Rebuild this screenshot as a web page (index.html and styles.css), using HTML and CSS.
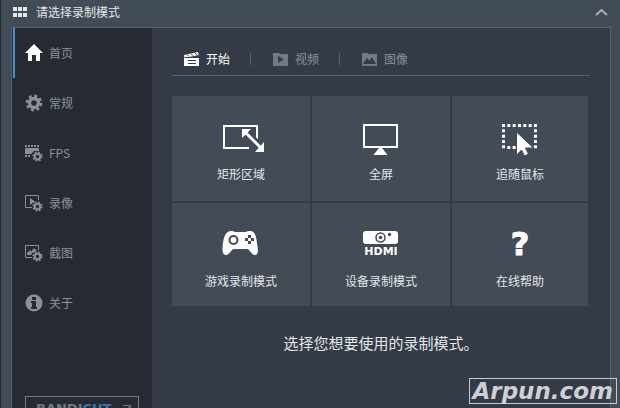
FILE: index.html
```html
<!DOCTYPE html>
<html lang="zh-CN">
<head>
  <meta charset="UTF-8" />
  <meta name="viewport" content="width=device-width, initial-scale=1.0"/>
  <title>请选择录制模式</title>
  <link rel="stylesheet" href="styles.css">
</head>
<body>
  <!-- shared gear shape -->
  <svg class="defs" width="0" height="0" aria-hidden="true">
    <symbol id="gear" viewBox="-9 -9 18 18">
      <g fill="none" stroke="currentColor">
        <circle r="4.5" stroke-width="3.4"/>
        <circle r="7" stroke-width="2.8" stroke-dasharray="2.9 2.6"/>
      </g>
    </symbol>
  </svg>

  <div class="window">
    <header class="titlebar">
      <svg class="grid-icon" width="14" height="10" viewBox="0 0 14 10" fill="currentColor">
        <path d="M0 0h4v4H0zM5 0h4v4H5zM10 0h4v4h-4zM0 6h4v4H0zM5 6h4v4H5zM10 6h4v4h-4z"/>
      </svg>
      <h1>请选择录制模式</h1>
      <button class="collapse" type="button" aria-label="收起">
        <svg width="14" height="8" viewBox="0 0 14 8" fill="none" stroke="currentColor" stroke-width="2"><path d="M1 7 6.500 2 12 7"/></svg>
      </button>
    </header>

    <div class="frame">
      <aside class="sidebar">
        <nav>
          <a class="nav-item active" href="#home">
            <svg width="18" height="18" viewBox="0 0 18 18" fill="currentColor"><path d="M9 0 18 9h-3v8h-4v-6H7v6H3V9H0z"/></svg>
            <span>首页</span>
          </a>
          <a class="nav-item" href="#general">
            <svg width="18" height="18"><use href="#gear"/></svg>
            <span>常规</span>
          </a>
          <a class="nav-item" href="#fps">
            <svg width="18" height="18" viewBox="0 0 18 18" fill="currentColor">
              <path d="M0 1h2v2H0zM3 1h2v2H3zM6 1h2v2H6zM9 1h2v2H9zM12 1h2v2h-2zM0 4h14v3H9L6 10H0zM0 11h2v2H0zM3 11h2v2H3z"/>
              <use href="#gear" x="7" y="7" width="11" height="11"/>
            </svg>
            <span>FPS</span>
          </a>
          <a class="nav-item" href="#video">
            <svg width="18" height="18" viewBox="0 0 18 18" fill="currentColor">
              <path d="M7 13.500H.5v-12h13V6" fill="none" stroke="currentColor"/>
              <path d="m5 4 5 3.500L5 11z"/>
              <use href="#gear" x="7" y="7" width="11" height="11"/>
            </svg>
            <span>录像</span>
          </a>
          <a class="nav-item" href="#image">
            <svg width="18" height="18" viewBox="0 0 18 18" fill="currentColor">
              <path d="M7 13.500H.5v-12h13V6" fill="none" stroke="currentColor"/>
              <path d="M2 11V9l3-3 1 2 3-4 3 3-5 2-1 2z"/>
              <use href="#gear" x="7" y="7" width="11" height="11"/>
            </svg>
            <span>截图</span>
          </a>
          <a class="nav-item" href="#about">
            <svg width="18" height="18" viewBox="0 0 18 18">
              <circle cx="9" cy="9" r="8.500" fill="currentColor"/>
              <path d="M7 3h4v3H7zM6 7h5v6h1v2H6v-2h1V9H6z" fill="#262b33"/>
            </svg>
            <span>关于</span>
          </a>
        </nav>
        <a class="bandicut" href="#bandicut">
          <span>BANDI<b>CUT</b></span>
          <svg width="9" height="9" viewBox="0 0 9 9" fill="none" stroke="currentColor"><path d="M1 .5h7.500V8M8.500.5 1 8"/></svg>
        </a>
      </aside>

      <main class="content">
        <div class="tabs">
          <button class="tab active" type="button">
            <svg width="16" height="14" viewBox="0 0 16 14">
              <path d="M0 6h15v8H0zM0 3 14 0l.6 3L.6 6z" fill="currentColor"/>
              <path d="m3 2.500 2 2M7 1.700l2 2M11 .9l2 2M4 8.500h8M4 11.500h8M1 5.500h14" stroke="#343b46" fill="none"/>
            </svg>
            <span>开始</span>
          </button>
          <button class="tab" type="button">
            <svg width="16" height="14" viewBox="0 0 16 14">
              <path d="M0 1h6l1 1h8v12H0z" fill="currentColor"/>
              <path d="m5 4 6 3.500L5 11z" fill="#343b46"/>
            </svg>
            <span>视频</span>
          </button>
          <button class="tab" type="button">
            <svg width="16" height="14" viewBox="0 0 16 14">
              <path d="M0 1h6l1 1h8v12H0z" fill="currentColor"/>
              <path d="m1 12 4-6 2.500 3L10 5l4 7z" fill="#343b46"/>
            </svg>
            <span>图像</span>
          </button>
        </div>

        <div class="modes">
          <button class="mode" type="button">
            <svg width="48" height="36" viewBox="0 0 48 36">
              <path d="M32 28H7V6h33v14" fill="none" stroke="currentColor" stroke-width="2"/>
              <path d="m26 10 22 22" stroke="#424b56" stroke-width="8"/>
              <path d="m28 12 16 16" stroke="currentColor" stroke-width="3"/>
              <path d="M25 9h9l-9 9zM47 22v10h-9z" fill="currentColor"/>
            </svg>
            <span>矩形区域</span>
          </button>
          <button class="mode" type="button">
            <svg width="48" height="36" viewBox="0 0 48 36">
              <path d="M7 5h33v22H7z" fill="none" stroke="currentColor" stroke-width="2"/>
              <path d="m23.500 26 7 9h-14z" fill="currentColor"/>
            </svg>
            <span>全屏</span>
          </button>
          <button class="mode" type="button">
            <svg width="48" height="36" viewBox="0 0 48 36">
              <path d="M6 5.500h35M39.500 9.300v20M7.500 9.300v20M11.300 27.500h10" fill="none" stroke="currentColor" stroke-width="3" stroke-dasharray="3 2.330"/>
              <path d="M20.500 12v23l5-5 3 6 4-2-3-6h8z" fill="currentColor" stroke="#424b56"/>
            </svg>
            <span>追随鼠标</span>
          </button>
          <button class="mode" type="button">
            <svg width="48" height="36" viewBox="0 0 48 36">
              <path d="M14 4c3 0 3 1 5 1h9c2 0 2-1 5-1 5 0 6 5 7 12 1 6 2 12-2 12-4 0-5-6-8-6H17c-3 0-4 6-8 6S5 22 6 16C7 9 9 4 14 4z" fill="currentColor"/>
              <circle cx="16.500" cy="13" r="4" fill="none" stroke="#424b56" stroke-width="2"/>
              <path d="M31 8h3v3h-3zM31 14h3v3h-3zM28 11h3v3h-3zM34 11h3v3h-3z" fill="#424b56"/>
            </svg>
            <span>游戏录制模式</span>
          </button>
          <button class="mode" type="button">
            <svg width="48" height="36" viewBox="0 0 48 36">
              <rect x="6" y="4" width="35" height="13" rx="3" fill="currentColor"/>
              <circle cx="23.500" cy="10.500" r="4.500" fill="none" stroke="#424b56" stroke-width="1.500"/>
              <circle cx="23.500" cy="10.500" r="1.800" fill="#424b56"/>
              <circle cx="32.500" cy="7.500" r="1.700" fill="#424b56"/>
              <text class="hdmi" x="24" y="28" text-anchor="middle" fill="currentColor">HDMI</text>
            </svg>
            <span>设备录制模式</span>
          </button>
          <button class="mode" type="button">
            <svg width="48" height="36" viewBox="0 0 48 36">
              <text class="question" x="24" y="28" text-anchor="middle" fill="currentColor">?</text>
            </svg>
            <span>在线帮助</span>
          </button>
        </div>

        <p class="hint">选择您想要使用的录制模式。</p>
      </main>
    </div>

    <div class="watermark">Arpun.com</div>
  </div>
</body>
</html>
```
FILE: styles.css
```css
:root {
  --window: #424c57;
  --panel: #343b46;
  --sidebar: #262b33;
  --tile: #424b56;
  --line: #59626d;
  --muted: #8b9097;
}

* {
  box-sizing: border-box;
}

body {
  margin: 0;
  font-family: "Noto Sans CJK SC", sans-serif;
  font-size: 12px;
  line-height: 18px;
  color: #e4e7ea;
}

svg {
  display: block;
  flex-shrink: 0;
  overflow: visible;
}

.defs {
  position: absolute;
}

button {
  padding: 0;
  border: none;
  background: none;
  color: inherit;
  font: inherit;
  cursor: pointer;
}

a {
  color: inherit;
  text-decoration: none;
}

.window {
  position: relative;
  display: flex;
  flex-direction: column;
  height: 100vh;
  overflow: hidden;
  padding: 0 9px 0 10px;
  border-left: 1px solid #20262e;
  background: var(--window);
}

.titlebar {
  display: flex;
  align-items: center;
  flex-shrink: 0;
  gap: 9px;
  height: 27px;
  padding: 0 2px 3px;
}

.titlebar h1 {
  margin: 0;
  font-size: 12px;
  font-weight: normal;
}

.collapse {
  margin-left: auto;
  color: #aab0b8;
}

.frame {
  display: flex;
  flex: 1;
  min-height: 0;
  border: 1px solid var(--line);
  border-bottom: none;
  background: var(--panel);
}

.sidebar {
  flex: 0 0 140px;
  overflow: hidden;
  background: var(--sidebar);
}

.nav-item {
  display: flex;
  align-items: center;
  gap: 6px;
  height: 50px;
  margin-left: 1px;
  padding-left: 10px;
  border-left: 2px solid transparent;
  color: var(--muted);
}

.nav-item.active {
  border-left-color: #4d8fcb;
}

.nav-item.active svg {
  color: #fff;
}

.bandicut {
  display: flex;
  align-items: center;
  justify-content: space-between;
  height: 26px;
  margin: 68px 13px 0;
  padding: 0 7px 0 10px;
  border: 1px solid #747980;
  color: #747980;
  font-family: "DejaVu Sans", sans-serif;
  font-size: 13px;
  font-weight: bold;
}

.bandicut b {
  color: #3978ad;
}

.content {
  flex: 1;
  padding: 15px 20px 0;
}

.tabs {
  display: flex;
  align-items: center;
  height: 33px;
  border-bottom: 1px solid var(--line);
}

.tab {
  display: flex;
  align-items: center;
  gap: 6px;
  padding: 0 20px 0 23px;
  color: var(--muted);
}

.tab:first-child {
  padding-left: 12px;
}

.tab svg {
  color: #747a83;
}

.tab.active,
.tab.active svg {
  color: #fff;
}

.tab + .tab {
  background: linear-gradient(#59626d, #59626d) left center / 1px 12px no-repeat;
}

.modes {
  display: grid;
  grid-template-columns: 138fr 138fr 136fr;
  grid-template-rows: 105px 103px;
  gap: 2px;
  margin: 20px 2px 0 0;
}

.mode {
  display: flex;
  flex-direction: column;
  align-items: center;
  gap: 9px;
  padding-top: 24px;
  background: var(--tile);
}

.mode svg {
  color: #fff;
}

.mode:hover {
  background: #4b5561;
}

.hdmi {
  font: bold 11px "DejaVu Sans", sans-serif;
}

.question {
  font: bold 32px "DejaVu Sans", sans-serif;
  stroke: currentColor;
  stroke-width: 1px;
}

.hint {
  margin: 27px 0 0;
  font-size: 15px;
  line-height: 20px;
  text-align: center;
}

.watermark {
  position: absolute;
  right: 3px;
  bottom: 4px;
  padding: 0 3px;
  border: 1px solid #c5cad3;
  color: #cdd0d5;
  font: italic bold 23px/24px "DejaVu Sans", sans-serif;
}
```
